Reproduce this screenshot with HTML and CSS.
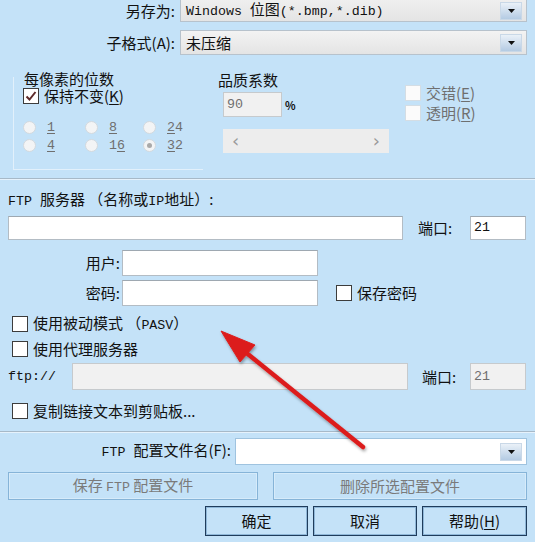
FILE: index.html
```html
<!DOCTYPE html>
<html lang="zh-CN">
<head>
    <meta charset="UTF-8">
    <meta name="viewport" content="width=device-width, initial-scale=1.0">
    <title>另存为</title>
    <link rel="stylesheet" href="styles.css">
</head>
<body>
    <div class="dialog">
        <div class="row row-type">
            <label class="lbl lbl-top">另存为:</label>
            <div class="combo combo-cut">
                <span class="combo-text"><span class="m">Windows </span>位图<span class="m">(*.bmp,*.dib)</span></span>
                <span class="drop"><svg width="7" height="4" viewBox="0 0 7 4"><path d="M0 0h7L3.5 4z" fill="#111"/></svg></span>
            </div>
        </div>

        <div class="row row-sub">
            <label class="lbl lbl-top">子格式(A):</label>
            <div class="combo">
                <span class="combo-text">未压缩</span>
                <span class="drop"><svg width="7" height="4" viewBox="0 0 7 4"><path d="M0 0h7L3.5 4z" fill="#111"/></svg></span>
            </div>
        </div>

        <div class="options">
            <div class="group">
                <div class="group-title">每像素的位数</div>
                <div class="chk-row keep">
                    <span class="cb"><svg width="14" height="14" viewBox="0 0 14 14"><path d="M2.5 7.5L5.5 10.5L11.5 3" fill="none" stroke="#5e2a2a" stroke-width="2"/></svg></span>
                    <span>保持不变(<u>K</u>)</span>
                </div>
                <div class="radios">
                    <div class="radio"><span class="rd"></span><span class="m dim"><u>1</u></span></div>
                    <div class="radio"><span class="rd"></span><span class="m dim"><u>8</u></span></div>
                    <div class="radio"><span class="rd"></span><span class="m dim"><u>2</u>4</span></div>
                    <div class="radio"><span class="rd"></span><span class="m dim"><u>4</u></span></div>
                    <div class="radio"><span class="rd"></span><span class="m dim">1<u>6</u></span></div>
                    <div class="radio"><span class="rd on"></span><span class="m dim"><u>3</u>2</span></div>
                </div>
            </div>

            <div class="quality">
                <div>品质系数</div>
                <div class="row q-row">
                    <div class="field off q-field"><span class="m">90</span></div>
                    <span class="pct">%</span>
                </div>
                <div class="scroll">
                    <span>&lsaquo;</span>
                    <span>&rsaquo;</span>
                </div>
            </div>

            <div class="flags">
                <div class="chk-row dim"><span class="cb off"></span><span>交错(<u>E</u>)</span></div>
                <div class="chk-row dim"><span class="cb off"></span><span>透明(<u>R</u>)</span></div>
            </div>
        </div>

        <div class="sep sep-top"></div>

        <div class="ftp-title"><span class="m">FTP </span>服务器 （名称或<span class="m">IP</span>地址）:</div>

        <div class="row row-server">
            <div class="field server"></div>
            <label class="port-lbl">端口:</label>
            <div class="field port"><span class="m">21</span></div>
        </div>

        <div class="row row-user">
            <label class="lbl lbl-user">用户:</label>
            <div class="field user"></div>
        </div>

        <div class="row row-pwd">
            <label class="lbl lbl-user">密码:</label>
            <div class="field user"></div>
            <div class="chk-row save-pwd"><span class="cb"></span><span>保存密码</span></div>
        </div>

        <div class="chk-row line-chk passive"><span class="cb"></span><span>使用被动模式 （<span class="m">PASV</span>）</span></div>
        <div class="chk-row line-chk proxy"><span class="cb"></span><span>使用代理服务器</span></div>

        <div class="row row-proxy">
            <label class="ftp-lbl m">ftp://</label>
            <div class="field off proxy-host"></div>
            <label class="port-lbl port-lbl2">端口:</label>
            <div class="field off port"><span class="m">21</span></div>
        </div>

        <div class="chk-row line-chk copy"><span class="cb"></span><span>复制链接文本到剪贴板...</span></div>

        <div class="sep sep-bottom"></div>

        <div class="row row-config">
            <label class="lbl lbl-config"><span class="m">FTP </span>配置文件名(F):</label>
            <div class="combo combo-edit">
                <span class="combo-text"></span>
                <span class="drop"><svg width="7" height="4" viewBox="0 0 7 4"><path d="M0 0h7L3.5 4z" fill="#111"/></svg></span>
            </div>
        </div>

        <div class="row row-cfg-btns">
            <button class="btn btn-off btn-save">保存 <span class="m">FTP</span> 配置文件</button>
            <button class="btn btn-off btn-del">删除所选配置文件</button>
        </div>

        <div class="row row-actions">
            <button class="btn btn-ok">确定</button>
            <button class="btn btn-cancel">取消</button>
            <button class="btn btn-help">帮助(<u>H</u>)</button>
        </div>

        <!-- 红色箭头标注 -->
        <svg class="arrow" width="535" height="542" viewBox="0 0 535 542">
            <defs>
                <filter id="sh" x="-20%" y="-20%" width="140%" height="140%">
                    <feDropShadow dx="1" dy="2" stdDeviation="1.5" flood-color="#000" flood-opacity="0.35"/>
                </filter>
            </defs>
            <g filter="url(#sh)" fill="#dc1f1f" stroke="#dc1f1f">
                <line x1="363" y1="447" x2="244" y2="351" stroke-width="4.5" stroke-linecap="round"/>
                <polygon points="221,331 255,345 240,362" stroke-width="1" stroke-linejoin="round"/>
            </g>
        </svg>
    </div>
</body>
</html>
```

FILE: styles.css
```css
body {
    margin: 0;
    background: #c4e2f8;
    font-family: "Noto Sans CJK SC", sans-serif;
    font-size: 15px;
    line-height: 16px;
    color: #111;
    overflow: hidden;
}
.dialog {
    position: relative;
    width: 535px;
    height: 542px;
    padding: 0 8px;
    box-sizing: border-box;
}
.m {
    font-family: "Liberation Mono", monospace;
    font-size: 13.3px;
}
.dim {
    color: #6f6f6f;
}
u {
    text-decoration: underline;
    text-underline-offset: 2px;
}
.row {
    display: flex;
    align-items: center;
}
.lbl {
    flex: none;
    text-align: right;
}
.row-type {
    height: 22px;
}
.row-sub {
    margin-top: 8px;
    height: 25px;
}
.lbl-top {
    width: 167px;
    margin-right: 5px;
}

/* combo boxes */
.combo {
    flex: none;
    width: 347px;
    height: 100%;
    box-sizing: border-box;
    border: 1px solid #b7c2cc;
    background: linear-gradient(#f3f3f3, #e4e4e4);
    display: flex;
    align-items: center;
    justify-content: space-between;
    padding-left: 5px;
}
.combo-cut {
    border-top: none;
    background: linear-gradient(#efefef, #e4e4e4);
}
.drop {
    width: 22px;
    height: 18px;
    margin-right: 4px;
    box-sizing: border-box;
    border: 1px solid #c9d8e7;
    background: linear-gradient(#eaf1f8, #b4cbe3);
    display: flex;
    align-items: center;
    justify-content: center;
}
.combo-edit {
    width: 292px;
    background: #fff;
    border-color: #9fc3df;
}

/* bits / quality block */
.options {
    display: flex;
    align-items: flex-start;
    margin-left: 5px;
}
.group {
    width: 190px;
    height: 93px;
    margin-top: 22px;
    box-sizing: border-box;
    border-left: 1px solid #e2f0fb;
    border-bottom: 1px solid #e2f0fb;
    padding-left: 10px;
}
.group-title {
    margin-top: -5px;
    line-height: 14px;
    margin-bottom: 2px;
}
.chk-row {
    display: flex;
    align-items: center;
    height: 16px;
}
.keep {
    margin-left: -1px;
}
.cb {
    flex: none;
    width: 16px;
    height: 16px;
    box-sizing: border-box;
    border: 1px solid #3c3c3c;
    background: #fff;
    margin-right: 5px;
    display: flex;
    align-items: center;
    justify-content: center;
}
.cb.off {
    border-color: #d4dde4;
    background: #fbfbfb;
}
.radios {
    display: grid;
    grid-template-columns: 62px 58px auto;
    row-gap: 5px;
    margin-top: 17px;
    margin-left: -1px;
}
.radio {
    display: flex;
    align-items: center;
    height: 13px;
}
.rd {
    flex: none;
    width: 13px;
    height: 13px;
    box-sizing: border-box;
    border: 1px solid #d3d9de;
    border-radius: 50%;
    background: #f3f4f5;
    margin-right: 11px;
    display: flex;
    align-items: center;
    justify-content: center;
}
.rd.on::after {
    content: "";
    width: 5px;
    height: 5px;
    border-radius: 50%;
    background: #a9a9a9;
}
.quality {
    width: 171px;
    margin-left: 15px;
    margin-top: 17px;
}
.q-row {
    margin-top: 4px;
    margin-left: 5px;
    height: 25px;
}
.q-field {
    width: 59px;
}
.pct {
    font-size: 11px;
    font-weight: bold;
    margin-left: 3px;
}
.scroll {
    width: 166px;
    height: 24px;
    margin-top: 12px;
    margin-left: 5px;
    background: #ededed;
    display: flex;
    align-items: center;
    justify-content: space-between;
    padding: 0 9px;
    box-sizing: border-box;
    color: #9a9a9a;
    font-family: "DejaVu Sans", sans-serif;
    font-size: 18px;
}
.flags {
    margin-left: 16px;
    margin-top: 30px;
    display: flex;
    flex-direction: column;
    gap: 4px;
}

/* separators */
.sep {
    border-top: 1px solid #a7b9c8;
    border-bottom: 1px solid #e6f2fc;
    margin-left: -8px;
    margin-right: -8px;
}
.sep-top {
    margin-top: 8px;
}
.sep-bottom {
    margin-top: 12px;
}

/* fields */
.field {
    flex: none;
    height: 100%;
    box-sizing: border-box;
    border: 1px solid #b3bcc4;
    border-top-color: #9ea8b1;
    background: #fff;
    display: flex;
    align-items: center;
    padding-left: 3px;
}
.field.off {
    background: #f1f1f1;
    border-color: #c6cacd;
    color: #6f6f6f;
}

/* ftp block */
.ftp-title {
    margin-top: 11px;
}
.row-server {
    margin-top: 6px;
    height: 24px;
}
.server {
    width: 395px;
}
.port-lbl {
    flex: none;
    width: 52px;
    margin-left: 15px;
}
.port-lbl2 {
    width: 48px;
    margin-left: 14px;
}
.port {
    width: 56px;
}
.row-user {
    margin-top: 10px;
    height: 26px;
}
.row-pwd {
    margin-top: 4px;
    height: 26px;
}
.lbl-user {
    width: 112px;
    margin-right: 2px;
}
.user {
    width: 196px;
}
.save-pwd {
    margin-left: 18px;
}
.line-chk {
    margin-left: 4px;
}
.passive {
    margin-top: 10px;
}
.proxy {
    margin-top: 9px;
}
.row-proxy {
    margin-top: 6px;
    height: 27px;
}
.ftp-lbl {
    flex: none;
    width: 64px;
}
.proxy-host {
    width: 336px;
}
.copy {
    margin-top: 13px;
}

/* config + buttons */
.row-config {
    margin-top: 5px;
    height: 27px;
}
.lbl-config {
    width: 223px;
    margin-right: 4px;
}
.row-cfg-btns {
    margin-top: 7px;
    height: 28px;
    gap: 15px;
}
.row-actions {
    margin-top: 6px;
    height: 30px;
    gap: 5px;
    justify-content: flex-end;
}
.btn {
    flex: none;
    height: 100%;
    margin: 0;
    padding: 0;
    font-family: "Noto Sans CJK SC", sans-serif;
    font-size: 15px;
    line-height: 16px;
    color: #111;
    background: #c4e2f8;
    border: 1px solid #1f3c5b;
    box-shadow: inset 0 0 0 1px #8fb7d8;
}
.btn-off {
    color: #7a7a7a;
    border-color: #86b4d8;
    box-shadow: inset 0 0 0 1px #d6ebfa;
}
.btn-save {
    width: 250px;
}
.btn-del {
    width: 254px;
}
.btn-ok {
    width: 103px;
}
.btn-cancel {
    width: 104px;
}
.btn-help {
    width: 105px;
}
.arrow {
    position: absolute;
    left: 0;
    top: 0;
    pointer-events: none;
}
```
